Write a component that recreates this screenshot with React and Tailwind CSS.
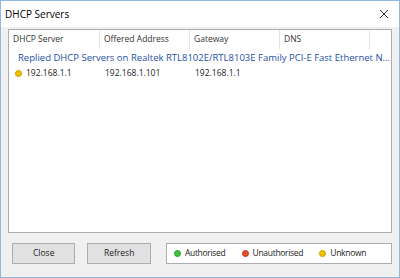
import React from "react";

const cols = [
  { label: "DHCP Server", w: "w-[91px]" },
  { label: "Offered Address", w: "w-[90px]" },
  { label: "Gateway", w: "w-[90px]" },
  { label: "DNS", w: "w-[90px]" },
];

function Dot({ color }) {
  return (
    <span
      className={`inline-block w-[7px] h-[7px] rounded-full border ${color}`}
    />
  );
}

export default function App() {
  return (
    <div
      className="w-[400px] h-[278px] bg-white flex flex-col border border-[#8fb8e0] text-[#1a1a1a]"
      style={{ fontFamily: '"Open Sans", "Noto Sans", sans-serif' }}
    >
      {/* title bar */}
      <div className="h-[26px] flex items-center justify-between pl-[4px] pr-[10px] bg-white">
        <span className="text-[10px] text-black">DHCP Servers</span>
        <svg width="10" height="10" viewBox="0 0 10 10" className="text-[#333]">
          <path d="M1 1 L9 9 M9 1 L1 9" stroke="currentColor" strokeWidth="1" />
        </svg>
      </div>

      {/* client */}
      <div className="flex-1 bg-[#f0f0f0] flex flex-col px-[7px] pt-[2px] pb-[9px]">
        <div className="h-[204px] bg-white border border-[#a9adb3] flex flex-col">
          <div className="flex h-[19px] text-[8.5px] text-[#333]">
            {cols.map((c) => (
              <div
                key={c.label}
                className={`${c.w} border-r border-[#e3e3e3] pl-[4px] flex items-center`}
              >
                {c.label}
              </div>
            ))}
          </div>
          <div className="pl-[9px] pt-[2px] text-[9.5px] text-[#1e4fa8] whitespace-nowrap">
            Replied DHCP Servers on Realtek RTL8102E/RTL8103E Family PCI-E Fast Ethernet N...
          </div>
          <div className="flex text-[8.5px] text-[#222] h-[16px] items-center">
            <div className="w-[91px] pl-[6px] flex items-center gap-[4px]">
              <Dot color="bg-[#f2c200] border-[#c89a00]" />
              <span>192.168.1.1</span>
            </div>
            <div className="w-[90px] pl-[5px]">192.168.1.101</div>
            <div className="w-[90px] pl-[5px]">192.168.1.1</div>
            <div className="w-[90px]" />
          </div>
        </div>

        <div className="flex items-center mt-[10px] pl-[4px] gap-[12px] text-[8.5px] text-[#222]">
          <button className="w-[64px] h-[21px] bg-[#e1e1e1] border border-[#adadad]">
            Close
          </button>
          <button className="w-[64px] h-[21px] bg-[#e1e1e1] border border-[#adadad]">
            Refresh
          </button>
          <div className="ml-[3px] w-[228px] h-[21px] bg-white border border-[#adadad] flex items-center pl-[7px] gap-[4px] tracking-[-0.3px]">
            <Dot color="bg-[#3cc43c] border-[#2a9a2a]" />
            <span className="mr-[12px]">Authorised</span>
            <Dot color="bg-[#e8502a] border-[#b83a1a]" />
            <span className="mr-[12px]">Unauthorised</span>
            <Dot color="bg-[#f2c200] border-[#c89a00]" />
            <span>Unknown</span>
          </div>
        </div>
      </div>
    </div>
  );
}
